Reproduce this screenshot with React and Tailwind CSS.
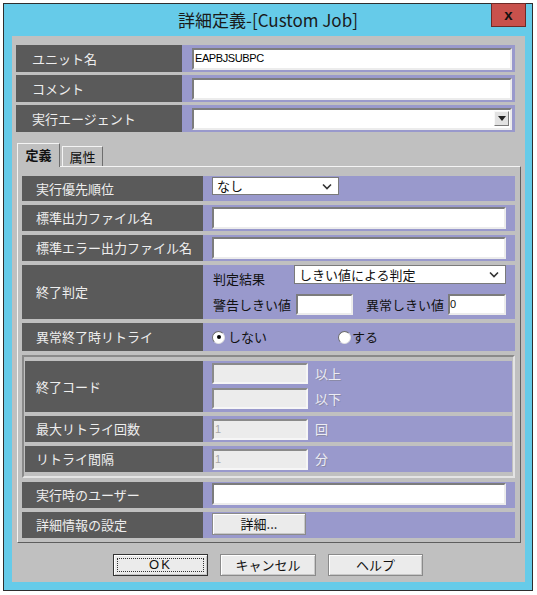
import React from "react";

const jp = "font-['Noto_Sans_CJK_JP',sans-serif]";

function Chevron() {
  return (
    <svg width="10" height="7" viewBox="0 0 10 7" className="shrink-0">
      <path d="M1 1.5 L5 5.5 L9 1.5" fill="none" stroke="#333" strokeWidth="1.6" />
    </svg>
  );
}

function Radio({ checked }) {
  return (
    <span className="w-[13px] h-[13px] rounded-full bg-white border border-t-[#6a6a6a] border-l-[#6a6a6a] border-r-[#e0e0e0] border-b-[#e0e0e0] flex items-center justify-center shrink-0">
      {checked && <span className="w-[4px] h-[4px] rounded-full bg-black" />}
    </span>
  );
}

function Btn({ children, focus, className }) {
  return (
    <div
      className={`${className} h-[22px] bg-[#ebebeb] border flex items-center justify-center relative text-[13px] text-[#111] shadow-[inset_1px_1px_0_#ffffff,inset_-1px_-1px_0_#c8c8c8] ${
        focus ? "border-[#333333]" : "border-[#8a8a8a]"
      }`}
    >
      {focus && <span className="absolute inset-[3px] border border-dotted border-[#333]" />}
      <span className="relative">{children}</span>
    </div>
  );
}

function TopRow({ label, children }) {
  return (
    <div className="flex h-[27px]">
      <div className="w-[166px] bg-[#5a5a5a] text-[#eeeeee] text-[13px] flex items-center pl-[16px]">{label}</div>
      <div className="flex-1 bg-[#9999cc] flex items-center pl-[10px]">{children}</div>
    </div>
  );
}

function Row({ label, h, children, inner }) {
  return (
    <div className={`flex ${h}`}>
      <div
        className={`${inner ? "w-[178px] pl-[11px]" : "w-[181px] pl-[14px]"} bg-[#5a5a5a] text-[#eeeeee] text-[13px] flex items-center shrink-0`}
      >
        {label}
      </div>
      <div className="flex-1 bg-[#9999cc] pl-[9px]">{children}</div>
    </div>
  );
}

const sunken =
  "bg-white border-2 border-t-[#7c7c7c] border-l-[#7c7c7c] border-r-[#ececec] border-b-[#ececec]";
const disabledBox =
  "bg-[#ececec] border-2 border-t-[#8a8a8a] border-l-[#8a8a8a] border-r-[#f6f6f6] border-b-[#f6f6f6] text-[#a8a8a8] text-[11px] font-['Liberation_Sans',sans-serif] flex items-center pl-[1px]";
const dimText = "text-[#ececf4] text-[13px] [text-shadow:1px_1px_0_#8a8aa8]";

export default function App() {
  return (
    <div className={`w-[537px] h-[595px] bg-white pt-[3px] pl-[3px] ${jp}`}>
      <div className="w-[530px] h-[588px] border border-[#2e2e2e] bg-[#66cbe9] flex flex-col">
        {/* title bar */}
        <div className="h-[32px] relative flex items-center justify-center text-[17px] text-[#1a1a1a] pb-[1px]">
          詳細定義-[Custom Job]
          <div className="absolute right-[6px] top-[-1px] w-[35px] h-[24px] bg-[#c8514c] border border-[#6e2a27] flex items-center justify-center">
            <span className="text-[15px] font-bold text-[#111] font-['Liberation_Sans',sans-serif] leading-none -mt-[2px]">x</span>
          </div>
        </div>

        {/* client area */}
        <div className="ml-[8px] w-[513px] h-[546px] bg-[#c0c0c0] flex flex-col">
          <div className="pt-[9px] px-[4px] flex flex-col gap-[3px] w-[507px]">
            <TopRow label="ユニット名">
              <div className={`${sunken} w-[320px] h-[22px] flex items-center pl-[1px] text-[11px] tracking-[-0.4px] text-black font-['Liberation_Sans',sans-serif]`}>
                EAPBJSUBPC
              </div>
            </TopRow>
            <TopRow label="コメント">
              <div className={`${sunken} w-[320px] h-[22px]`} />
            </TopRow>
            <TopRow label="実行エージェント">
              <div className={`${sunken} w-[320px] h-[22px] flex items-center justify-end pr-[1px]`}>
                <div className="w-[15px] h-[15px] bg-[#e2e2e2] border border-t-[#f8f8f8] border-l-[#f8f8f8] border-r-[#7a7a7a] border-b-[#7a7a7a] flex items-center justify-center">
                  <svg width="8" height="5" viewBox="0 0 8 5">
                    <path d="M0 0 H8 L4 5 Z" fill="#222" />
                  </svg>
                </div>
              </div>
            </TopRow>
          </div>

          {/* tabs */}
          <div className="mt-[11px] ml-[5px] h-[23px] flex items-end relative z-10">
            <div className="w-[43px] h-[24px] -mb-[1px] bg-[#c0c0c0] border border-b-0 border-t-[#f4f4f4] border-l-[#f4f4f4] border-r-[#6e6e6e] flex items-center justify-center text-[13px] font-bold text-[#111] pb-[2px]">
              定義
            </div>
            <div className="w-[41px] h-[20px] ml-[2px] bg-[#c0c0c0] border border-b-0 border-t-[#f4f4f4] border-l-[#f4f4f4] border-r-[#6e6e6e] flex items-center justify-center text-[13px] text-[#111]">
              属性
            </div>
          </div>

          {/* tab panel */}
          <div className="ml-[5px] w-[504px] h-[377px] border border-t-[#f4f4f4] border-l-[#f4f4f4] border-r-[#5e5e5e] border-b-[#5e5e5e] pt-[9px] pl-[4px] pr-[5px] flex flex-col gap-[4px]">
            <Row label="実行優先順位" h="h-[25px]">
              <div className="mt-[1px] w-[127px] h-[18px] bg-white border border-[#7a7a7a] flex items-center justify-between pl-[4px] pr-[6px] text-[13px] text-[#111]">
                なし
                <Chevron />
              </div>
            </Row>
            <Row label="標準出力ファイル名" h="h-[26px]">
              <div className={`${sunken} mt-[2px] w-[294px] h-[22px]`} />
            </Row>
            <Row label="標準エラー出力ファイル名" h="h-[26px]">
              <div className={`${sunken} mt-[2px] w-[294px] h-[22px]`} />
            </Row>
            <Row label="終了判定" h="h-[54px]">
              <div className="flex flex-col text-[13px] text-[#111]">
                <div className="flex items-start h-[29px]">
                  <span className="mt-[4px] w-[82px] pl-[1px]">判定結果</span>
                  <div className="w-[212px] h-[19px] bg-white border border-[#7a7a7a] flex items-center justify-between pl-[4px] pr-[6px]">
                    しきい値による判定
                    <Chevron />
                  </div>
                </div>
                <div className="flex items-center">
                  <span className="pl-[1px] w-[84px]">警告しきい値</span>
                  <div className={`${sunken} w-[57px] h-[21px]`} />
                  <span className="ml-[13px] w-[82px]">異常しきい値</span>
                  <div className={`${sunken} w-[58px] h-[21px] flex items-center text-[11px] font-['Liberation_Sans',sans-serif]`}>0</div>
                </div>
              </div>
            </Row>
            <Row label="異常終了時リトライ" h="h-[28px]">
              <div className="h-full flex items-center text-[13px] text-[#111]">
                <Radio checked />
                <span className="ml-[3px] w-[110px]">しない</span>
                <Radio />
                <span className="ml-[1px]">する</span>
              </div>
            </Row>

            {/* retry group */}
            <div className="h-[123px] border-2 border-t-[#8a8a8a] border-l-[#8a8a8a] border-r-[#e4e4e4] border-b-[#e4e4e4] pt-[4px] px-[1px] flex flex-col gap-[4px]">
              <Row label="終了コード" h="h-[51px]" inner>
                <div className="flex flex-col gap-[4px] pt-[2px]">
                  <div className="flex items-center">
                    <div className={`${disabledBox} w-[96px] h-[21px]`} />
                    <span className={`ml-[7px] ${dimText}`}>以上</span>
                  </div>
                  <div className="flex items-center">
                    <div className={`${disabledBox} w-[96px] h-[21px]`} />
                    <span className={`ml-[7px] ${dimText}`}>以下</span>
                  </div>
                </div>
              </Row>
              <Row label="最大リトライ回数" h="h-[26px]" inner>
                <div className="flex items-center h-full">
                  <div className={`${disabledBox} w-[96px] h-[21px]`}>1</div>
                  <span className={`ml-[7px] ${dimText}`}>回</span>
                </div>
              </Row>
              <Row label="リトライ間隔" h="h-[26px]" inner>
                <div className="flex items-center h-full">
                  <div className={`${disabledBox} w-[96px] h-[21px]`}>1</div>
                  <span className={`ml-[7px] ${dimText}`}>分</span>
                </div>
              </Row>
            </div>

            <Row label="実行時のユーザー" h="h-[26px]">
              <div className={`${sunken} mt-[1px] w-[294px] h-[22px]`} />
            </Row>
            <Row label="詳細情報の設定" h="h-[26px]">
              <Btn className="mt-[1px] w-[94px]">詳細...</Btn>
            </Row>
          </div>

          {/* buttons */}
          <div className="mt-[11px] flex justify-center gap-[12px] pr-[1px]">
            <Btn focus className="w-[95px] font-['Liberation_Sans',sans-serif] tracking-[2px]">OK</Btn>
            <Btn className="w-[96px]">キャンセル</Btn>
            <Btn className="w-[95px]">ヘルプ</Btn>
          </div>
        </div>
      </div>
    </div>
  );
}
